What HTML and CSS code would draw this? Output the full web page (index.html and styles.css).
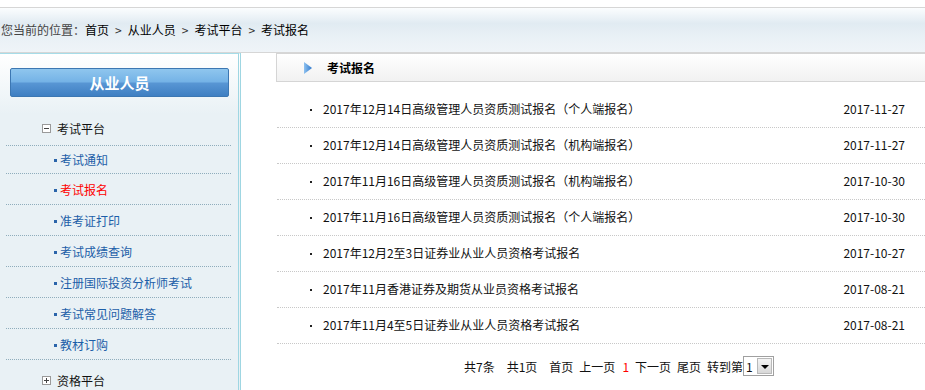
FILE: index.html
```html
<!DOCTYPE html>
<html>
<head lang="zh-CN">
    <meta charset="UTF-8">
    <title>考试报名</title>
    <link rel="stylesheet" href="styles.css">
</head>
<body>
<div class="crumb">
    <span class="crumb-label">您当前的位置：</span><a>首页</a><span class="sep">&gt;</span><a>从业人员</a><span class="sep">&gt;</span><a>考试平台</a><span class="sep">&gt;</span><a>考试报名</a>
</div>
<div class="wrap">
    <div class="side">
        <div class="side-btn">从业人员</div>
        <div class="group open">
            <svg class="toggle" width="9" height="9" viewBox="0 0 9 9"><rect x="0.5" y="0.5" width="8" height="8" fill="#fff" stroke="#9a9a9a"/><path d="M2 4.5h5" stroke="#444"/></svg>
            考试平台
        </div>
        <ul class="menu">
            <li class="first"><a>考试通知</a></li>
            <li class="on"><a>考试报名</a></li>
            <li><a>准考证打印</a></li>
            <li><a>考试成绩查询</a></li>
            <li><a>注册国际投资分析师考试</a></li>
            <li><a>考试常见问题解答</a></li>
            <li><a>教材订购</a></li>
        </ul>
        <div class="group">
            <svg class="toggle" width="9" height="9" viewBox="0 0 9 9"><rect x="0.5" y="0.5" width="8" height="8" fill="#fff" stroke="#9a9a9a"/><path d="M2 4.5h5M4.5 2v5" stroke="#444"/></svg>
            资格平台
        </div>
    </div>
    <div class="main">
        <div class="main-title">
            <svg class="arrow" width="8" height="12" viewBox="0 0 8 12"><defs><linearGradient id="ag" x1="0" y1="0" x2="1" y2="0"><stop offset="0" stop-color="#8fc2f0"/><stop offset="1" stop-color="#2f78cc"/></linearGradient></defs><polygon points="0,0 8,6 0,12" fill="url(#ag)"/></svg>
            <span>考试报名</span>
        </div>
        <ul class="list">
            <li><a>2017年12月14日高级管理人员资质测试报名（个人端报名）</a><span class="date">2017-11-27</span></li>
            <li><a>2017年12月14日高级管理人员资质测试报名（机构端报名）</a><span class="date">2017-11-27</span></li>
            <li><a>2017年11月16日高级管理人员资质测试报名（机构端报名）</a><span class="date">2017-10-30</span></li>
            <li><a>2017年11月16日高级管理人员资质测试报名（个人端报名）</a><span class="date">2017-10-30</span></li>
            <li><a>2017年12月2至3日证券业从业人员资格考试报名</a><span class="date">2017-10-27</span></li>
            <li><a>2017年11月香港证券及期货从业员资格考试报名</a><span class="date">2017-08-21</span></li>
            <li><a>2017年11月4至5日证券业从业人员资格考试报名</a><span class="date">2017-08-21</span></li>
        </ul>
        <div class="pager">
            <span class="p-total">共7条</span>
            <span class="p-pages">共1页</span>
            <a>首页</a>
            <a>上一页</a>
            <span class="cur">1</span>
            <a>下一页</a>
            <a>尾页</a>
            <span class="p-go">转到第</span><span class="sel"><span class="sel-val">1</span><span class="sel-btn"></span></span>
        </div>
    </div>
</div>
</body>
</html>
```

FILE: styles.css
```css
* {
    margin: 0;
    padding: 0
}

body {
    font-family: "SimSun", "Noto Sans CJK SC", sans-serif;
    font-size: 12px;
    color: #000;
    background: #fff;
}

ul {
    list-style: none;
}

a {
    color: inherit;
    text-decoration: none;
}

.crumb {
    margin-top: 7px;
    height: 44px;
    line-height: 44px;
    border-top: 1px solid #d6d6d6;
    border-bottom: 1px solid #d6d6d6;
    background: linear-gradient(#fbfdfe 0%, #e1ebf2 35%, #eaf1f6 70%, #eff4f8 100%);
    padding-left: 1px;
}

.crumb-label {
    color: #444;
}

.sep {
    display: inline-block;
    padding: 0 6px;
    color: #333;
}

.wrap {
    display: flex;
}

/* 左侧菜单 */
.side {
    width: 238px;
    height: 340px;
    border-top: 1px solid #a6dce8;
    border-right: 3px double #9fd6e2;
    background: linear-gradient(#fff 0, #e9f1f5 60px, #e9f1f5 100%);
}

.side-btn {
    margin: 14px 0 0 10px;
    width: 217px;
    height: 27px;
    line-height: 27px;
    border: 1px solid #3c77b2;
    border-radius: 2px;
    background: linear-gradient(#8fc6ee 0%, #74b2e6 48%, #5896d4 52%, #3f7fc2 100%);
    color: #fff;
    font-size: 15px;
    font-weight: bold;
    text-align: center;
}

.group {
    display: flex;
    align-items: center;
    margin: 0 7px 0 6px;
    padding-left: 36px;
    height: 33px;
    color: #111;
}

.group.open {
    margin-top: 15px;
    border-bottom: 1px dotted #8fadbc;
}

.group:last-child {
    height: 40px;
}

.toggle {
    margin-right: 6px;
}

.menu {
    margin: 0 7px 0 6px;
}

.menu li {
    height: 30px;
    line-height: 32px;
    border-bottom: 1px dotted #8fadbc;
    padding-left: 48px;
    color: #1c5ea8;
}

.menu li.first {
    height: 27px;
    line-height: 27px;
}

.menu li a::before {
    content: "";
    display: inline-block;
    width: 3px;
    height: 3px;
    background: #2a64aa;
    margin-right: 3px;
    vertical-align: 3px;
}

.menu li.on {
    color: #f00;
}

/* 右侧列表 */
.main {
    flex: 1;
    margin-left: 35px;
}

.main-title {
    display: flex;
    align-items: center;
    height: 27px;
    border: 1px solid #d5d5d5;
    border-right: none;
    background: linear-gradient(#fff, #f1f1f1);
    padding-left: 27px;
    font-weight: bold;
}

.arrow {
    margin-right: 15px;
}

.list {
    padding: 10px 0 0 1px;
}

.list li {
    display: flex;
    justify-content: space-between;
    height: 35px;
    line-height: 34px;
    border-bottom: 1px dotted #c8c8c8;
    padding: 0 20px 0 33px;
    color: #111;
}

.list li a::before {
    content: "";
    display: inline-block;
    width: 2px;
    height: 2px;
    background: #222;
    margin-right: 11px;
    vertical-align: 3px;
}

.pager {
    display: flex;
    align-items: center;
    height: 20px;
    margin-top: 12px;
    padding-left: 188px;
    color: #111;
}

.pager a,
.pager span {
    margin-right: 6px;
}

.pager .p-total,
.pager .p-pages {
    margin-right: 12px;
}

.pager .cur {
    color: #f00;
    margin: 0 6px 0 1px;
}

.pager .p-go {
    margin-right: 0;
}

.sel {
    display: inline-flex;
    align-items: center;
    width: 29px;
    height: 18px;
    border: 1px solid #a0a0a0;
    background: #fff;
}

.sel .sel-val {
    flex: 1;
    margin: 0 0 0 2px;
}

.sel .sel-btn {
    position: relative;
    width: 15px;
    height: 16px;
    margin: 0 1px 0 0;
    background: linear-gradient(#f4f4f4, #d8d8d8);
    border: 1px solid #b9b9b9;
    box-sizing: border-box;
}

.sel .sel-btn::after {
    content: "";
    position: absolute;
    left: 3px;
    top: 6px;
    border-left: 4px solid transparent;
    border-right: 4px solid transparent;
    border-top: 4px solid #000;
}
```
